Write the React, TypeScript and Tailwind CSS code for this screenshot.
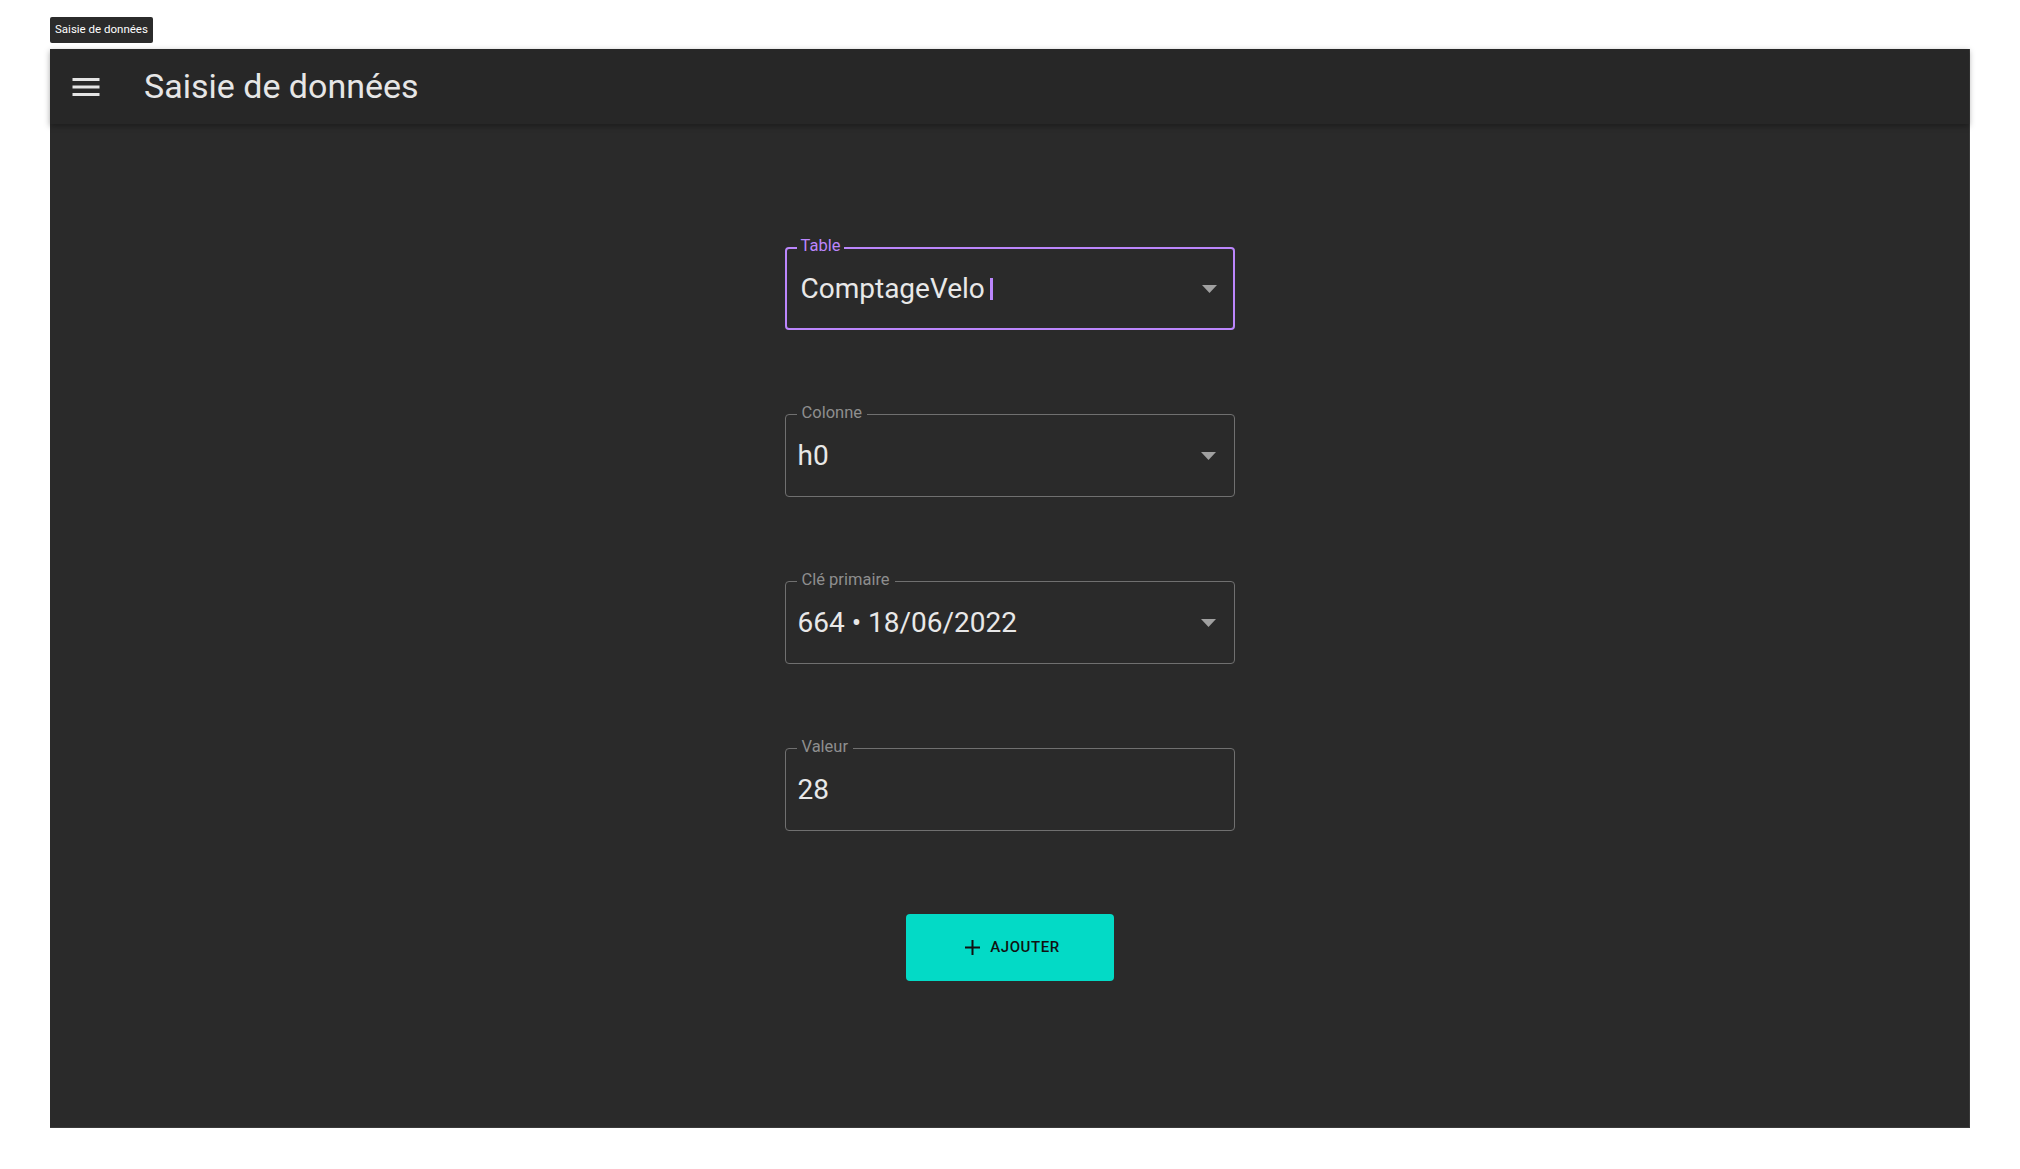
import React from "react";

const FONT = { fontFamily: "Roboto, 'Noto Sans', sans-serif" };

function MenuIcon() {
  return (
    <svg viewBox="0 0 24 24" className="w-[36px] h-[36px]" fill="#e4e4e4">
      <path d="M3 18h18v-2H3v2zm0-5h18v-2H3v2zm0-7v2h18V6H3z" />
    </svg>
  );
}

function Caret() {
  return (
    <svg viewBox="0 0 15 8" className="w-[15px] h-[8px]" fill="#a0a0a0">
      <path d="M0 0h15L7.5 8z" />
    </svg>
  );
}

function Field({
  label,
  value,
  select,
  focused,
}: {
  label: string;
  value: string;
  select?: boolean;
  focused?: boolean;
}) {
  return (
    <div
      className={
        focused
          ? "relative w-[450px] h-[83px] rounded-[4px] border-2 border-[#bb86fc] flex items-center pl-[14px] pr-[16px]"
          : "relative w-[450px] h-[83px] rounded-[4px] border border-[#707070] flex items-center pl-[12px] pr-[18px]"
      }
    >
      <span
        className={
          focused
            ? "absolute top-[-11px] left-[10px] px-[4px] bg-[#2a2a2a] text-[16.5px] leading-[16px] text-[#bb86fc]"
            : "absolute top-[-10px] left-[11px] px-[5px] bg-[#2a2a2a] text-[16.5px] leading-[16px] text-[#8e8e8e]"
        }
      >
        {label}
      </span>
      <div className="flex-1 flex items-center text-[28px] leading-none text-[#e8e8e8]">
        {value}
        {focused && <span className="ml-[5px] w-[3px] h-[22px] bg-[#bb86fc]" />}
      </div>
      {select && <Caret />}
    </div>
  );
}

export default function App() {
  return (
    <div className="min-h-[1169px] bg-white pt-[17px] pl-[50px]" style={FONT}>
      <div className="w-fit h-[26px] px-[5px] flex items-center rounded-[2px] bg-[#2b2b2b] text-white text-[11.5px]">
        Saisie de données
      </div>
      <div className="mt-[6px] w-[1920px] h-[1079px] bg-[#2a2a2a] flex flex-col border-r border-b border-[#3a3a3a]">
        <header className="relative z-10 h-[75px] shrink-0 bg-[#272727] flex items-center pl-[18px] shadow-[0_2px_6px_rgba(0,0,0,0.35)]">
          <MenuIcon />
          <h1 className="ml-[40px] text-[34px] font-normal text-[#e6e6e6]">Saisie de données</h1>
        </header>
        <main className="flex-1 flex flex-col items-center pt-[123px] gap-[84px]">
          <Field label="Table" value="ComptageVelo" select focused />
          <Field label="Colonne" value="h0" select />
          <Field label="Clé primaire" value="664 • 18/06/2022" select />
          <Field label="Valeur" value="28" />
          <button className="-mt-[1px] w-[208px] h-[67px] rounded-[4px] bg-[#03dac6] flex items-center justify-center gap-[10px] pl-[6px] text-[15px] font-medium tracking-[0.6px] text-[#111]">
            <svg viewBox="0 0 15 15" className="w-[15px] h-[15px]" stroke="#111" strokeWidth="2">
              <path d="M7.5 0v15M0 7.5h15" />
            </svg>
            AJOUTER
          </button>
        </main>
      </div>
    </div>
  );
}
